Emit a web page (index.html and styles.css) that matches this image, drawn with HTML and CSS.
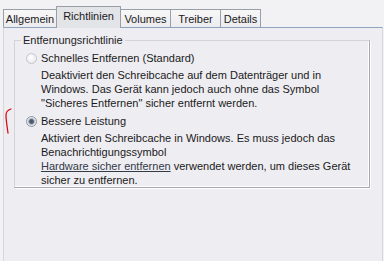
FILE: index.html
```html
<!DOCTYPE html>
<html lang="de">
<head>
    <meta charset="UTF-8">
    <title>Eigenschaften - Richtlinien</title>
    <link rel="stylesheet" href="styles.css">
</head>
<body>
  <div class="dialog">
    <!-- tab strip -->
    <div class="tabs">
      <div class="tab t-allgemein">Allgemein</div>
      <div class="tab t-richtlinien selected">Richtlinien</div>
      <div class="tab t-volumes">Volumes</div>
      <div class="tab t-treiber">Treiber</div>
      <div class="tab t-details">Details</div>
    </div>

    <div class="page">
      <fieldset class="group">
        <legend>Entfernungsrichtlinie</legend>

        <div class="option">
          <span class="radio"></span>
          <span class="label">Schnelles Entfernen (Standard)</span>
        </div>
        <p class="desc">Deaktiviert den Schreibcache auf dem Datenträger und in Windows. Das Gerät kann jedoch auch ohne das Symbol "Sicheres Entfernen" sicher entfernt werden.</p>

        <div class="option">
          <span class="radio checked"></span>
          <span class="label">Bessere Leistung</span>
        </div>
        <p class="desc">Aktiviert den Schreibcache in Windows. Es muss jedoch das<br>Benachrichtigungssymbol<br><a href="#">Hardware sicher entfernen</a> verwendet werden, um dieses Gerät sicher zu entfernen.</p>
      </fieldset>
    </div>

    <!-- hand-drawn red mark on the screenshot -->
    <svg class="mark" width="12" height="26" viewBox="0 0 12 26">
      <path d="M9 1 C6 2 4 4 4 7 C4 12 5 18 6 25" fill="none" stroke="#d81010" stroke-width="1.3" stroke-linecap="round"/>
    </svg>
  </div>
</body>
</html>
```

FILE: styles.css
```css
html, body {
  margin: 0;
  padding: 0;
}

body {
  background-color: #f2f1f4;
  font-family: "Liberation Sans", Arial, sans-serif;
  font-size: 11px;
  color: #000;
}

.dialog {
  position: relative;
  width: 384px;
  height: 261px;
  overflow: hidden;
}

.tabs {
  display: flex;
  padding: 7px 0 0 3px;
  height: 20px;
  align-items: flex-end;
}

.tab {
  height: 18px;
  line-height: 18px;
  text-align: center;
  border: 1px solid #9a9ea6;
  border-bottom: none;
  margin-right: -1px;
  background: linear-gradient(#f7f7f8, #ececef);
  color: #1a1a1a;
  box-sizing: border-box;
  white-space: nowrap;
}

.t-allgemein { width: 54px; }
.t-richtlinien { width: 65px; }
.t-volumes { width: 51px; }
.t-treiber { width: 51px; }
.t-details { width: 41px; }

.tab.selected {
  height: 22px;
  line-height: 19px;
  background: #e3e4e8;
  position: relative;
  z-index: 1;
  margin-bottom: -1px;
}

.page {
  height: 234px;
  margin-left: 3px;
  margin-right: 1px;
  border-top: 1px solid #8fa3bd;
  border-left: 1px solid #d8d8dc;
  border-right: 1px solid #d8d8dc;
  background-color: #eeedf2;
  padding: 6px 12px 0 10px;
  box-sizing: border-box;
}

.group {
  margin: 0;
  height: 154px;
  border: 1px solid #d4d3d8;
  border-right-color: #a8a8ac;
  border-bottom-color: #a8a8ac;
  box-shadow: inset -1px -1px 0 #ffffff, 1px 1px 0 #ffffff;
  padding: 4px 10px 0 11px;
  box-sizing: border-box;
}

.group legend {
  padding: 0 2px;
  margin-left: -5px;
  color: #222;
}

.option {
  display: flex;
  align-items: center;
  height: 16px;
}

.radio {
  width: 11px;
  height: 11px;
  border-radius: 50%;
  border: 1px solid #c4c6cc;
  background: radial-gradient(circle at 40% 40%, #ffffff, #e2e4e8);
  margin-right: 4px;
  box-sizing: border-box;
}

.radio.checked {
  border-color: #8c96a4;
  background: radial-gradient(circle, #3f4a5a 0, #5d6877 2px, #d8dce4 3.5px, #f4f5f7 5px);
}

.label {
  color: #1a1a1a;
}

.desc {
  margin: 2px 0 3px 15px;
  line-height: 14px;
  color: #1a1a1a;
}

.desc a {
  color: #333a48;
  text-decoration: underline;
}

.mark {
  position: absolute;
  left: 2px;
  top: 108px;
}
```
